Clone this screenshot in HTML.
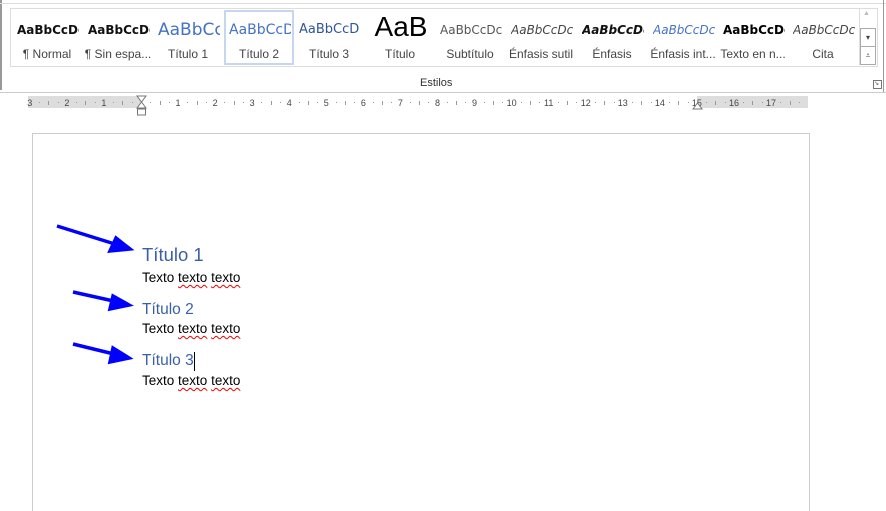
<!DOCTYPE html>
<html style="overflow:hidden;height:511px"><head><meta charset="utf-8"><style>
body{margin:0;width:886px;height:511px;background:#fff;position:relative;overflow:hidden;font-family:"Liberation Sans",sans-serif}
.a{position:absolute}
.it{position:absolute;top:12px;width:70px;height:50px;text-align:center;overflow:hidden}
.pv{height:33px;line-height:36px;width:62px;margin-left:5px;text-align:left;font-size:13px;white-space:nowrap;overflow:hidden;font-family:"DejaVu Sans","Liberation Sans",sans-serif}
.lb{font-size:12px;color:#444;line-height:18px;white-space:nowrap}
.num{position:absolute;top:98px;font-size:9px;color:#444;width:10px;text-align:center;margin-left:-5px}
.tk{position:absolute;top:101px;width:1px;height:4px;background:#999}
.dt{position:absolute;top:102px;width:1px;height:1px;background:#999}
.h{color:#3a5fa8;font-family:"Liberation Sans",sans-serif}
.t{font-size:13.5px;color:#000}
.u{text-decoration:underline wavy #e00;text-decoration-thickness:1px;text-underline-offset:2px}
</style></head><body>
<div class="a" style="left:0;top:0;width:2px;height:90px;background:#999"></div>
<div class="a" style="left:0;top:3px;width:886px;height:1px;background:#ddd"></div>
<div class="a" style="left:10px;top:8px;width:866px;height:57px;border:1px solid #ddd"></div>
<div class="a" style="left:859px;top:8px;width:16px;height:57px;border-left:1px solid #ddd"></div>
<div class="a" style="left:860px;top:28px;width:14px;height:17px;border:1px solid #aaa;font-size:8px;text-align:center;line-height:17px;color:#444">▾</div>
<div class="a" style="left:860px;top:46px;width:14px;height:17px;border:1px solid #aaa;font-size:8px;text-align:center;line-height:17px;color:#444">⩡</div>
<div class="a" style="left:863px;top:10px;font-size:7px;color:#bbb">▲</div>
<div class="a" style="left:224px;top:10px;width:66px;height:51px;border:2px solid #c5d6ef"></div>

<div class="it" style="left:12px"><div class="pv" style="font-size:12px;font-weight:bold;color:#111">AaBbCcDc</div><div class="lb">¶ Normal</div></div>
<div class="it" style="left:83px"><div class="pv" style="font-size:12px;font-weight:bold;color:#111">AaBbCcDc</div><div class="lb">¶ Sin espa...</div></div>
<div class="it" style="left:153px"><div class="pv" style="font-size:17px;color:#4472c4">AaBbCc</div><div class="lb">Título 1</div></div>
<div class="it" style="left:224px"><div class="pv" style="font-size:14px;color:#4472c4">AaBbCcD</div><div class="lb">Título 2</div></div>
<div class="it" style="left:294px"><div class="pv" style="font-size:13px;color:#2f5597">AaBbCcD</div><div class="lb">Título 3</div></div>
<div class="it" style="left:365px"><div class="pv" style="font-size:28px;line-height:30px;color:#000;font-family:'Liberation Sans',sans-serif;text-align:center">AaB</div><div class="lb">Título</div></div>
<div class="it" style="left:435px"><div class="pv" style="font-size:12px;color:#555">AaBbCcDc</div><div class="lb">Subtítulo</div></div>
<div class="it" style="left:506px"><div class="pv" style="font-size:12px;font-style:italic;color:#444">AaBbCcDc</div><div class="lb">Énfasis sutil</div></div>
<div class="it" style="left:577px"><div class="pv" style="font-size:12px;font-style:italic;font-weight:bold;color:#111">AaBbCcDc</div><div class="lb">Énfasis</div></div>
<div class="it" style="left:648px"><div class="pv" style="font-size:12px;font-style:italic;color:#4472c4">AaBbCcDc</div><div class="lb">Énfasis int...</div></div>
<div class="it" style="left:718px"><div class="pv" style="font-size:12px;font-weight:bold;color:#000">AaBbCcDc</div><div class="lb">Texto en n...</div></div>
<div class="it" style="left:788px"><div class="pv" style="font-size:12px;font-style:italic;color:#444">AaBbCcDc</div><div class="lb">Cita</div></div>

<div class="a" style="left:420px;top:77px;font-size:11px;color:#333">Estilos</div>
<div class="a" style="left:873px;top:80px;width:7px;height:7px;border:1px solid #777;font-size:6px;line-height:7px;color:#555">↘</div>
<div class="a" style="left:883px;top:0;width:1px;height:92px;background:#999"></div>
<div class="a" style="left:0;top:92px;width:886px;height:1px;background:#ccc"></div>

<div class="a" style="left:28px;top:96px;width:780px;height:12px;background:#fff"></div>
<div class="a" style="left:28px;top:96px;width:113px;height:12px;background:#ddd"></div>
<div class="a" style="left:697px;top:96px;width:111px;height:12px;background:#ddd"></div>
<div id="r"></div>
<svg class="a" style="left:136px;top:95px" width="12" height="22"><path d="M1 1H10L5.5 7L10 13H1L5.5 7Z" fill="#fff" stroke="#777"/><rect x="1.5" y="14" width="8" height="6" fill="#fff" stroke="#777"/></svg>
<svg class="a" style="left:692px;top:101px" width="12" height="9"><path d="M1 8L5.5 2L10 8Z" fill="#fff" stroke="#777"/></svg>

<div class="a" style="left:32px;top:133px;width:776px;height:378px;border:1px solid #ccc;border-bottom:none;background:#fff"></div>
<svg class="a" style="left:0;top:0" width="886" height="511"><g stroke="#0000ff" stroke-width="3.5" fill="#0000ff"><line x1="57" y1="226" x2="118" y2="245"/><path d="M130 249L110 251L116 238Z"/><line x1="73" y1="292" x2="118" y2="302"/><path d="M129 305L110 309L113 296Z"/><line x1="73" y1="344" x2="118" y2="355"/><path d="M129 358L110 362L113 348Z"/></g></svg>
<div class="a h" style="left:142px;top:244px;font-size:18.5px">Título 1</div>
<div class="a t" style="left:142px;top:270px">Texto <span class="u">texto</span> <span class="u">texto</span></div>
<div class="a h" style="left:142px;top:301px;font-size:15.5px">Título 2</div>
<div class="a t" style="left:142px;top:321px">Texto <span class="u">texto</span> <span class="u">texto</span></div>
<div class="a h" style="left:142px;top:352px;font-size:15.5px">Título 3</div>
<div class="a" style="left:194px;top:352px;width:1px;height:19px;background:#000"></div>
<div class="a t" style="left:142px;top:373px">Texto <span class="u">texto</span> <span class="u">texto</span></div>
<script>
var r=document.getElementById('r'),h='',c=37.06,o=141;
for(var i=-3;i<=18;i++){var x=o+i*c;
 if(i!=0&&i<=17){h+='<div class="num" style="left:'+x+'px">'+Math.abs(i)+'</div>';}
 for(var q=1;q<4;q++){var xx=x+q*c/4;if(xx>28&&xx<806){h+=q==2?'<div class="tk" style="left:'+xx+'px"></div>':'<div class="dt" style="left:'+xx+'px"></div>';}}
}
r.innerHTML=h;
</script>
</body></html>
